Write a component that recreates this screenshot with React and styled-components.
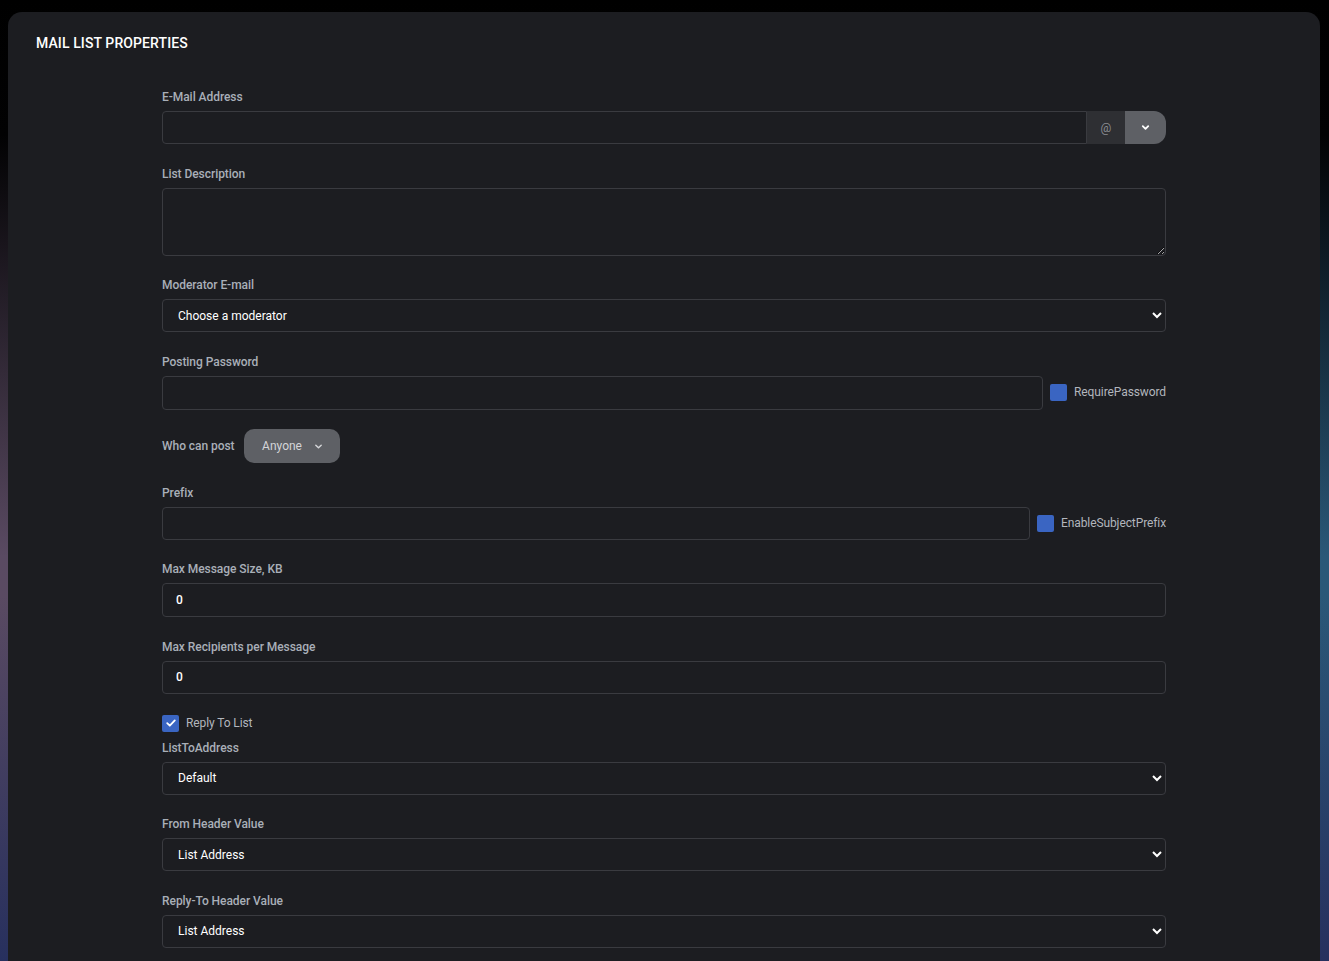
import React, { useState } from "react";
import styled, { createGlobalStyle } from "styled-components";

const GlobalStyle = createGlobalStyle`
  html, body {
    margin: 0;
    padding: 0;
    min-height: 100%;
  }
  body {
    font-family: Roboto, "Liberation Sans", sans-serif;
    background:
      linear-gradient(180deg, #000000 0%, #020203 14%, rgba(0, 0, 0, 0) 58%),
      linear-gradient(180deg, rgba(39, 48, 94, 0) 62%, #27305e 100%),
      linear-gradient(90deg, #5a4a62 0%, #3f4a6a 50%, #2a5878 100%);
    background-attachment: fixed;
    min-height: 961px;
  }
`;

const Page = styled.div`
  padding: 12px 9px 0 8px;
  min-height: 961px;
  box-sizing: border-box;
`;

const Card = styled.div`
  background: #1c1d21;
  border-radius: 14px 14px 0 0;
  padding: 23px 28px 40px;
  min-height: 949px;
  box-sizing: border-box;
`;

const Title = styled.h1`
  margin: 0 0 36px;
  font-size: 14px;
  line-height: 16px;
  font-weight: 500;
  color: #ffffff;
  letter-spacing: 0.1px;
`;

const Form = styled.div`
  max-width: 1004px;
  margin: 0 auto;
`;

const Group = styled.div`
  margin-bottom: ${(p) => p.gap || "19.5px"};
`;

const Label = styled.label`
  display: block;
  font-size: 12px;
  line-height: 18px;
  font-weight: 500;
  color: #a9afb8;
  padding-top: 1px;
  margin-bottom: 5px;
  letter-spacing: -0.05px;
`;

const Row = styled.div`
  display: flex;
  align-items: center;
`;

const Input = styled.input`
  box-sizing: border-box;
  flex: 1;
  width: 100%;
  height: ${(p) => p.h || "33px"};
  background: #1c1d21;
  border: 1px solid #3a3b40;
  border-radius: ${(p) => (p.joined ? "4px 0 0 4px" : "4px")};
  padding: 0 13px;
  font-family: inherit;
  font-size: 12px;
  font-weight: 500;
  color: #ffffff;
  outline: none;
`;

const TextArea = styled.textarea`
  box-sizing: border-box;
  display: block;
  width: 100%;
  height: 68px;
  background: #1c1d21;
  border: 1px solid #3a3b40;
  border-radius: 4px;
  padding: 8px 13px;
  font-family: inherit;
  font-size: 12px;
  color: #ffffff;
  color-scheme: dark;
  outline: none;
`;

const Select = styled.select`
  box-sizing: border-box;
  display: block;
  width: 100%;
  height: 33px;
  background: #1c1d21;
  border: 1px solid #3a3b40;
  border-radius: 4px;
  padding: 0 8px 0 11px;
  font-family: inherit;
  font-size: 12px;
  font-weight: 400;
  color: #ffffff;
  color-scheme: dark;
  outline: none;
`;

const AtAddon = styled.span`
  width: 38px;
  height: 33px;
  display: flex;
  align-items: center;
  justify-content: center;
  background: #2e2f33;
  color: #8a8c91;
  font-size: 12px;
`;

const AddonButton = styled.button`
  width: 41px;
  height: 33px;
  border: none;
  background: #5e6065;
  border-radius: 0 12px 12px 0;
  display: flex;
  align-items: center;
  justify-content: center;
  padding: 0;
  cursor: pointer;
`;

const CheckLabel = styled.label`
  display: flex;
  align-items: center;
  gap: 7px;
  margin-left: ${(p) => p.offset || "0"};
  font-size: 12px;
  line-height: 17px;
  color: #b2b6bd;
  white-space: nowrap;
  letter-spacing: -0.1px;
  cursor: pointer;
`;

const Box = styled.span`
  width: 17px;
  height: 17px;
  border-radius: 2px;
  background: #3a65c2;
  display: flex;
  align-items: center;
  justify-content: center;
  flex-shrink: 0;
`;

const InlineLabel = styled.span`
  font-size: 12px;
  font-weight: 500;
  color: #a9afb8;
  margin-right: 9px;
  letter-spacing: -0.05px;
`;

const PillButton = styled.button`
  height: 34px;
  width: 96px;
  border: none;
  border-radius: 10px;
  background: #5e6065;
  color: #d4d5d8;
  font-family: inherit;
  font-size: 12px;
  display: flex;
  align-items: center;
  justify-content: center;
  gap: 12px;
  padding: 0 0 0 2px;
  cursor: pointer;
`;

const Chevron = ({ size = 8, color = "#fff", width = 2 }) => (
  <svg width={size} height={size} viewBox="0 0 10 10">
    <path d="M2 3.5 L5 6.5 L8 3.5" fill="none" stroke={color} strokeWidth={width} strokeLinecap="round" strokeLinejoin="round" />
  </svg>
);

const Check = () => (
  <svg width="12" height="12" viewBox="0 0 12 12">
    <path d="M2.2 6.2 L4.8 8.7 L9.8 3.4" fill="none" stroke="#fff" strokeWidth="1.8" strokeLinecap="round" strokeLinejoin="round" />
  </svg>
);

const CheckBox = ({ checked, onToggle, children, offset }) => (
  <CheckLabel offset={offset} onClick={onToggle}>
    <Box>{checked && <Check />}</Box>
    {children}
  </CheckLabel>
);

export default function App() {
  const [replyToList, setReplyToList] = useState(true);
  const [requirePwd, setRequirePwd] = useState(false);
  const [enablePrefix, setEnablePrefix] = useState(false);

  return (
    <Page>
      <GlobalStyle />
      <Card>
        <Title>MAIL LIST PROPERTIES</Title>
        <Form>
          <Group>
            <Label>E-Mail Address</Label>
            <Row>
              <Input joined />
              <AtAddon>@</AtAddon>
              <AddonButton>
                <Chevron size={9} />
              </AddonButton>
            </Row>
          </Group>

          <Group>
            <Label>List Description</Label>
            <TextArea />
          </Group>

          <Group>
            <Label>Moderator E-mail</Label>
            <Select defaultValue="">
              <option value="">Choose a moderator</option>
            </Select>
          </Group>

          <Group>
            <Label>Posting Password</Label>
            <Row>
              <Input type="password" h="34px" />
              <CheckBox offset="7px" checked={requirePwd} onToggle={() => setRequirePwd(!requirePwd)}>
                RequirePassword
              </CheckBox>
            </Row>
          </Group>

          <Group>
            <Row>
              <InlineLabel>Who can post</InlineLabel>
              <PillButton>
                Anyone
                <Chevron size={9} color="#d4d5d8" width={1.6} />
              </PillButton>
            </Row>
          </Group>

          <Group>
            <Label>Prefix</Label>
            <Row>
              <Input />
              <CheckBox offset="7px" checked={enablePrefix} onToggle={() => setEnablePrefix(!enablePrefix)}>
                EnableSubjectPrefix
              </CheckBox>
            </Row>
          </Group>

          <Group>
            <Label>Max Message Size, KB</Label>
            <Input defaultValue="0" h="34px" />
          </Group>

          <Group gap="21px">
            <Label>Max Recipients per Message</Label>
            <Input defaultValue="0" />
          </Group>

          <Group gap="6px">
            <CheckBox checked={replyToList} onToggle={() => setReplyToList(!replyToList)}>
              Reply To List
            </CheckBox>
          </Group>

          <Group>
            <Label>ListToAddress</Label>
            <Select defaultValue="default">
              <option value="default">Default</option>
            </Select>
          </Group>

          <Group>
            <Label>From Header Value</Label>
            <Select defaultValue="list">
              <option value="list">List Address</option>
            </Select>
          </Group>

          <Group>
            <Label>Reply-To Header Value</Label>
            <Select defaultValue="list">
              <option value="list">List Address</option>
            </Select>
          </Group>
        </Form>
      </Card>
    </Page>
  );
}
